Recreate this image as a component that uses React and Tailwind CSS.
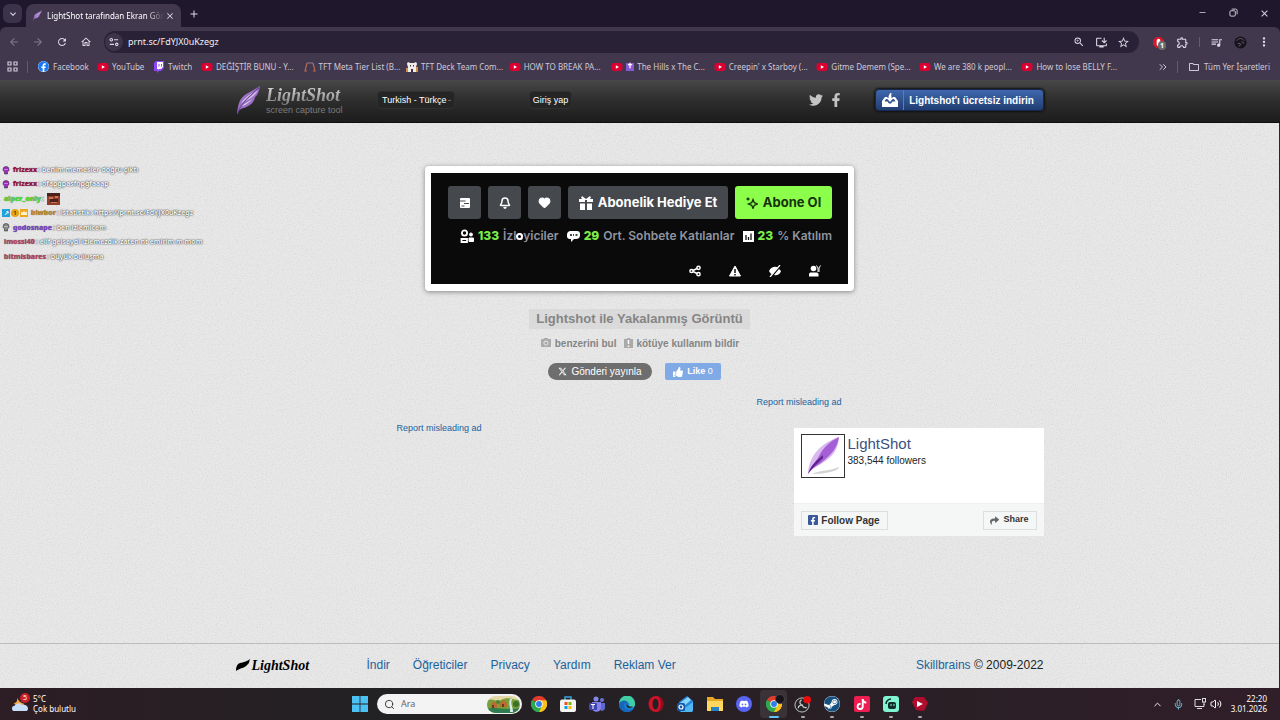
import React, { useState } from 'react';
import { FaFacebook, FaFacebookF, FaTwitter, FaTwitch, FaDiscord, FaSteam, FaTiktok, FaThumbsUp, FaShare } from 'react-icons/fa';
import { FaXTwitter } from 'react-icons/fa6';
import {
  MdArrowBack,
  MdArrowForward,
  MdRefresh,
  MdOutlineHome,
  MdZoomIn,
  MdInstallDesktop,
  MdStarOutline,
  MdOutlineExtension,
  MdQueueMusic,
  MdMoreVert,
  MdKeyboardArrowDown,
  MdOutlineFolder,
  MdClose,
  MdAdd,
  MdCameraAlt,
} from 'react-icons/md';
import { Bell, Heart, Mic, Volume2, ChevronUp, ChevronsRight, Search, Minus } from 'lucide-react';

const videoBookmarks = [
  { icon: 'youtube', label: 'DEĞİŞTİR BUNU - Y...' },
  { icon: 'tft', label: 'TFT Meta Tier List (B...' },
  { icon: 'deck', label: 'TFT Deck Team Com...' },
  { icon: 'youtube', label: 'HOW TO BREAK PA...' },
  { icon: 'youtube', label: 'The Hills x The C...', cross: true },
  { icon: 'youtube', label: "Creepin' x Starboy (..." },
  { icon: 'youtube', label: 'Gitme Demem (Spe...' },
  { icon: 'youtube', label: 'We are 380 k peopl...' },
  { icon: 'youtube', label: 'How to lose BELLY F...' },
];

const chatLines = [
  { badges: ['purple'], name: 'frizexx', color: 'text-[#9c1040]', text: 'benim memesler doğru çıktı' },
  { badges: ['purple'], name: 'frizexx', color: 'text-[#9c1040]', text: 'ofapğpasfopğfaaap' },
  { badges: [], name: 'alper_only', color: 'text-[#4be32c]', text: '', emote: true },
  { badges: ['blue', 'gold', 'orange'], name: 'blwbor', color: 'text-[#c98a2b]', text: 'istatistik: https://prnt.sc/FdYJX0uKzegz' },
  { badges: ['gray'], name: 'godosnape', color: 'text-[#7a45c9]', text: 'ben izlemicem' },
  { badges: [], name: 'imossi40', color: 'text-[#b8445f]', text: 'elif gelseydi izlemezdik zaten nt emirim m mom' },
  { badges: [], name: 'bitmisbares', color: 'text-[#b8445f]', text: 'büyük buluşma' },
];

const footerLinks = ['İndir', 'Öğreticiler', 'Privacy', 'Yardım', 'Reklam Ver'];

function Feather({ className }) {
  return (
    <svg viewBox="0 0 26 32" className={className} aria-hidden="true">
      <path d="M25 1C17 7 5 10 3 19c-1 3-2 7-2 12 1-3 2-5 5-6 9-2 13-7 14-12 3-3 5-7 5-12z" fill="#9a6fc4" />
      <path d="M23 5C14 10 7 15 5 20c4-3 9-4 14-9 2-2 3-4 4-6zM5 23c5-1 9-4 12-8-4 3-8 4-12 8z" fill="#d3c3e4" />
      <path d="M24 3C15 12 5 18 1 31" fill="none" stroke="#6a4596" strokeWidth="1.1" />
    </svg>
  );
}

function YoutubeIcon({ className }) {
  return (
    <svg viewBox="0 0 12 12" className={className} aria-hidden="true">
      <rect x=".5" y="2" width="11" height="8" rx="2.4" fill="#dc0030" />
      <path d="M4.8 4.3v3.4L8 6z" fill="#fff" />
    </svg>
  );
}

function BookmarkIcon({ name }) {
  if (name === 'youtube') return <YoutubeIcon className="size-3 shrink-0" />;
  if (name === 'tft')
    return (
      <svg viewBox="0 0 12 12" className="size-3 shrink-0" fill="none" aria-hidden="true">
        <path d="M3 2h6" stroke="#7d7187" strokeWidth="1.2" />
        <path d="M3 2 1 10h2M9 2l2 8H9" stroke="#c06a55" strokeWidth="1.1" />
      </svg>
    );
  return (
    <svg viewBox="0 0 12 12" className="size-3 shrink-0" aria-hidden="true">
      <path d="M1 3c0-2 2-2 3-1h4c1-1 3-1 3 1l-1 3 1 5H1l1-5z" fill="#f0ecea" />
      <path d="M0 7h2v4H0zM10 6h2v5h-2z" fill="#cf8e4e" />
      <path d="M4 4h1v1.500H4zM7 4h1v1.500H7zM5 8h2v3H5z" fill="#3d3340" />
    </svg>
  );
}

function ChromeIcon({ className }) {
  return (
    <svg viewBox="0 0 24 24" className={className} aria-hidden="true">
      <path d="M12 12 1.6 6A12 12 0 0 1 22.4 6z" fill="#e33b2e" />
      <path d="M12 12 22.4 6A12 12 0 0 1 12 24z" fill="#fbc116" />
      <path d="M12 12v12A12 12 0 0 1 1.6 6z" fill="#2da94f" />
      <path d="M12 6.500h10.600A12 12 0 0 1 12 24l4.800-9.300z" fill="#fbc116" />
      <path d="M1.6 6 7.2 14.800 16.700 14.800 12 24A12 12 0 0 1 1.6 6z" fill="#2da94f" />
      <circle cx="12" cy="12" r="5.6" fill="#fff" />
      <circle cx="12" cy="12" r="4.4" fill="#2f7de9" />
    </svg>
  );
}

function WindowTabs() {
  return (
    <div className="flex h-[27px] items-center">
      <button aria-label="Sekme ara" className="ml-[3px] flex h-[19px] w-[19px] items-center justify-center rounded-md bg-[#3b3349]">
        <MdKeyboardArrowDown className="size-3" />
      </button>
      <div className="ml-1 flex h-[23px] w-[155px] items-center self-end rounded-t-lg bg-[#41384d] px-1.5">
        <Feather className="h-[11px] w-[11px] shrink-0" />
        <span className="ml-1 whitespace-nowrap text-[8px] text-white [mask-image:linear-gradient(to_right,black_85%,transparent)]">
          LightShot tarafından Ekran Gör
        </span>
        <button aria-label="Sekmeyi kapat" className="ml-auto">
          <MdClose className="size-[10px]" />
        </button>
      </div>
      <button aria-label="Yeni sekme" className="ml-[7px]">
        <MdAdd className="size-3" />
      </button>
      <div className="ml-auto flex">
        <button aria-label="Küçült" className="flex w-[31px] justify-center">
          <Minus className="size-[9px]" />
        </button>
        <button aria-label="Önceki boyut" className="flex w-[31px] justify-center">
          <svg viewBox="0 0 10 10" className="size-[9px]" fill="none" stroke="currentColor">
            <rect x="1" y="3" width="6" height="6" rx="1.2" />
            <path d="M3 1.2h4.5A1.5 1.5 0 0 1 9 2.7V7" />
          </svg>
        </button>
        <button aria-label="Kapat" className="flex w-[31px] justify-center">
          <MdClose className="size-[11px]" />
        </button>
      </div>
    </div>
  );
}

function AddressRow() {
  const [url, setUrl] = useState('prnt.sc/FdYJX0uKzegz');
  return (
    <div className="flex h-[22px] items-center pl-0.5 pr-1">
      <button aria-label="Geri" className="flex w-6 justify-center text-[#83798f]"><MdArrowBack className="size-3" /></button>
      <button aria-label="İleri" className="flex w-6 justify-center text-[#83798f]"><MdArrowForward className="size-3" /></button>
      <button aria-label="Yenile" className="flex w-6 justify-center"><MdRefresh className="size-3" /></button>
      <button aria-label="Ana sayfa" className="flex w-6 justify-center"><MdOutlineHome className="size-3" /></button>
      <div className="ml-1.5 flex h-[22px] flex-1 items-center rounded-full bg-[#292135] pl-px pr-[5px]">
        <button aria-label="Site bilgileri" className="flex size-[18px] items-center justify-center rounded-full bg-[#3d3449]">
          <svg viewBox="0 0 12 12" className="size-[10px]" fill="none" stroke="currentColor" strokeWidth="1.3">
            <circle cx="2.7" cy="3.2" r="1.5" />
            <path d="M6 3.200h5M1 8.800h5" />
            <circle cx="9.3" cy="8.8" r="1.5" />
          </svg>
        </button>
        <input
          aria-label="Adres çubuğu"
          value={url}
          onChange={e => setUrl(e.target.value)}
          className="ml-[5px] min-w-0 flex-1 bg-transparent text-[9px] text-[#f2eef5] outline-none"
        />
        <button aria-label="Yakınlaştır" className="flex w-[22px] justify-center"><MdZoomIn className="size-3" /></button>
        <button aria-label="Yükle" className="flex w-[22px] justify-center"><MdInstallDesktop className="size-[13px]" /></button>
        <button aria-label="Yer işareti ekle" className="flex w-[22px] justify-center"><MdStarOutline className="size-[13px]" /></button>
      </div>
      <button aria-label="Reklam engelleyici" className="relative ml-[7px] flex w-6 justify-center">
        <svg viewBox="0 0 12 12" className="size-[11px]">
          <path d="M3.500 0h5L12 3.500v5L8.500 12h-5L0 8.500v-5z" fill="#d5182b" />
          <path d="M4 9V5c0-2 1-3 2-3s2 1 2 2v4l-2 2z" fill="#fff" />
        </svg>
        <span className="absolute left-3 top-1 h-[9px] w-2 rounded-sm bg-[#6b6b6b] text-center text-[7px] font-bold leading-[9px] text-white">1</span>
      </button>
      <button aria-label="Uzantılar" className="flex w-6 justify-center"><MdOutlineExtension className="size-[13px]" /></button>
      <div className="flex w-[10px] justify-center"><div className="h-[10px] w-px bg-[#655a72]" /></div>
      <button aria-label="Medya" className="flex w-6 justify-center"><MdQueueMusic className="size-[13px]" /></button>
      <button aria-label="Profil" className="flex w-6 justify-center">
        <svg viewBox="0 0 14 14" className="size-[13px]">
          <circle cx="7" cy="7" r="6.5" fill="#17131c" />
          <path d="M3 5c2-3 6-3 8 0M4 8h3M8 6l3 2M5 11l3-2" stroke="#6d6575" fill="none" />
        </svg>
      </button>
      <button aria-label="Menü" className="flex w-6 justify-center"><MdMoreVert className="size-[14px]" /></button>
    </div>
  );
}

function BookmarksRow() {
  return (
    <div className="flex h-[27px] items-center whitespace-nowrap pl-[7px] pr-[10px] text-[8px] text-[#d0c8d8]">
      <button aria-label="Uygulamalar">
        <svg viewBox="0 0 11 11" className="size-[11px]" fill="none" stroke="currentColor" strokeWidth="1.2">
          <path d="M1 1h3v3H1zM7 1h3v3H7zM1 7h3v3H1zM7 7h3v3H7z" />
        </svg>
      </button>
      <div className="ml-[9px] h-3 w-px bg-[#655a72]" />
      <a href="#" className="ml-[10px] flex w-[59px] items-center gap-1">
        <span className="rounded-full bg-white"><FaFacebook className="size-[11px] text-[#1877f2]" /></span>Facebook
      </a>
      <a href="#" className="flex w-14 items-center gap-[3px]"><YoutubeIcon className="size-3" />YouTube</a>
      <a href="#" className="flex w-12 items-center gap-1">
        <svg viewBox="0 0 11 12" className="h-3 w-[11px]" aria-hidden="true">
          <path d="M3 0h8v7L8 10H6l-2 2v-2H1V2z" fill="#8f45f5" />
          <path d="M4 1h6v5L8 8H6L5 9V8H4z" fill="#fff" />
          <path d="M6 3v2.500M8.500 3v2.500" stroke="#8f45f5" />
        </svg>
        Twitch
      </a>
      <div className="grid w-[923px] grid-cols-9">
        {videoBookmarks.map(item => (
          <a href="#" key={item.label} className="flex items-center gap-[3px]">
            <BookmarkIcon name={item.icon} />
            {item.cross && <span className="flex size-2 items-center justify-center bg-[#8559d6] text-[7px] font-bold text-white">✝</span>}
            {item.label}
          </a>
        ))}
      </div>
      <button aria-label="Diğer yer işaretleri" className="ml-auto"><ChevronsRight className="size-3" /></button>
      <div className="ml-2 mr-[10px] h-3 w-px bg-[#655a72]" />
      <a href="#" className="flex items-center gap-1"><MdOutlineFolder className="size-3" />Tüm Yer İşaretleri</a>
    </div>
  );
}

function SiteHeader() {
  return (
    <header className="border-b border-[#0f0f0f] bg-linear-to-b from-[#484848] via-[#2d2d2d] to-[#1c1c1c] font-['Liberation_Sans',sans-serif]">
      <div className="mx-auto flex h-[42px] w-full max-w-[808px] items-center pb-0.5">
        <a href="#" className="flex w-[141px] items-center gap-[5px]">
          <Feather className="h-[30px] w-[25px]" />
          <span className="flex flex-col items-start">
            <span className="bg-linear-to-b from-[#e4e4e4] to-[#777] bg-clip-text pr-1 font-['Liberation_Serif',serif] text-[18px] font-bold italic leading-5 text-transparent">LightShot</span>
            <span className="text-[9px] leading-[10px] text-[#7c7c7c]">screen capture tool</span>
          </span>
        </a>
        <div className="relative flex">
          <select aria-label="Dil" className="h-[18px] w-[78px] appearance-none rounded border border-[#303030] bg-[#252525] pl-1 text-[9px] leading-4 text-white">
            <option>Turkish - Türkçe</option>
          </select>
          <span className="pointer-events-none absolute right-1 top-[9px] h-px w-[3px] bg-[#6a6a6a]" />
        </div>
        <button className="ml-[74px] h-[18px] w-[43px] rounded border border-[#303030] bg-[#252525] text-[9px] leading-4 text-white">Giriş yap</button>
        <a href="#" aria-label="Twitter" className="ml-auto text-[#c4c4c4]"><FaTwitter className="size-[14px]" /></a>
        <a href="#" aria-label="Facebook" className="ml-[6px] text-[#c4c4c4]"><FaFacebookF className="size-[14px]" /></a>
        <button className="ml-8 flex h-[22px] w-[169px] items-center rounded border border-[#16284d] bg-linear-to-b from-[#3f68ae] to-[#213e73] text-[10px] font-bold text-white shadow-[0_0_2px_1px_#111]">
          <span className="flex h-full w-7 items-center justify-center border-r border-[#5b7db5]">
            <svg viewBox="0 0 16 14" className="h-[14px] w-4" fill="#fff" aria-hidden="true">
              <path d="M0 8 3 4h2.500v2H4L2.500 8.500h3l1.500 2h2l1.500-2h3L12 6h-1.500V4H13l3 4v6H0z" />
              <path d="M8.500 0C7 1 6.500 3 6.500 5H4.500L8 9l3.500-4h-2c0-2-.5-3 0-5z" />
            </svg>
          </span>
          <span className="flex-1 pr-1 text-center">Lightshot'ı ücretsiz indirin</span>
        </button>
      </div>
    </header>
  );
}

function ChatBadge({ kind }) {
  if (kind === 'blue') return <span className="flex size-2 items-center justify-center bg-[#1fa3d8] text-[6px] text-white">↗</span>;
  if (kind === 'gold') return <span className="flex size-2 items-center justify-center rounded-full bg-[#e5a512] text-[6px] text-[#503400]">1</span>;
  if (kind === 'orange')
    return (
      <svg viewBox="0 0 8 8" className="size-2" aria-hidden="true">
        <path d="M0 0h8v8H0z" fill="#f0a51f" />
        <path d="M1 6V2.500l1.500 1L4 2l1.500 1.500 1.500-1V6z" fill="#fff3d0" />
      </svg>
    );
  return (
    <svg viewBox="0 0 8 9" className={kind === 'purple' ? 'h-[9px] w-2 text-[#a32bc4]' : 'h-[9px] w-2 text-[#888]'} aria-hidden="true">
      <path d="M1 3.500a3 3 0 0 1 6 0C7 5 6 5.500 5.500 6v2h-3V6C2 5.500 1 5 1 3.500z" fill="currentColor" stroke="#333" strokeWidth=".6" />
      <path d="M2.500 3.500h1M4.500 3.500h1" stroke="#fff" strokeWidth=".8" />
    </svg>
  );
}

function ChatOverlay() {
  return (
    <ul className="absolute left-[2px] top-[40px] z-10 grid h-[101px] grid-rows-7 font-['Noto_Sans',sans-serif] text-[7px] font-semibold">
      {chatLines.map((line, i) => (
        <li key={i} className="flex items-center gap-px whitespace-nowrap">
          {line.badges.map(b => <ChatBadge key={b} kind={b} />)}
          <span className={`${line.color} ml-[2px] font-extrabold [text-shadow:0_0_1px_#555]`}>{line.name}</span>
          <span className="text-white [text-shadow:0_0_1px_#444,0_0_1px_#666,0_0_2px_#666]">: {line.text}</span>
          {line.emote && (
            <svg viewBox="0 0 13 12" className="ml-0.5 h-3 w-[13px]" aria-hidden="true">
              <path d="M0 0h13v12H0z" fill="#8e3f2c" />
              <path d="M0 0h13v3H0zM3 6h8v3H3z" fill="#4b211d" />
              <path d="M2 4h4v2H2zM8 3h3v2H8zM4 9h6v1H4z" fill="#d2714d" />
            </svg>
          )}
        </li>
      ))}
    </ul>
  );
}

function StreamCapture() {
  return (
    <div className="w-[429px] rounded bg-white px-[6px] py-[7px] shadow-[0_1px_5px_#888]">
      <div className="bg-[#0a0a0b] pb-[7px] pl-[17px] pr-4 pt-[13px] font-['Inter',sans-serif] font-semibold text-white">
        <div className="flex h-[33px] gap-[7px] text-[13px] font-bold">
          <button aria-label="Sohbet" className="flex w-[33px] items-center justify-center rounded-[3px] bg-[#45484c]">
            <svg viewBox="0 0 12 12" className="size-3">
              <rect x="1" y="1" width="10" height="10" rx="1" fill="#fff" />
              <path d="M1 4h5.500M5 6.500h5M2.500 9h3" stroke="#45484c" strokeWidth="1.200" />
            </svg>
          </button>
          <button aria-label="Bildirimler" className="flex w-[33px] items-center justify-center rounded-[3px] bg-[#45484c]">
            <Bell className="size-3" strokeWidth={3} />
          </button>
          <button aria-label="Takip" className="flex w-[33px] items-center justify-center rounded-[3px] bg-[#45484c]">
            <Heart className="size-[13px] fill-white" />
          </button>
          <button className="flex flex-1 items-center justify-center gap-[5px] whitespace-nowrap rounded-[3px] bg-[#45484c]">
            <svg viewBox="0 0 14 14" className="size-[14px]" fill="#fff" aria-hidden="true">
              <path d="M0 3h6v3H0zM8 3h6v3H8zM1 7.500h5V14H1zM8 7.500h5V14H8z" />
              <path d="M3 0l4 3 4-3 1 2-3 2H5L2 2z" />
            </svg>
            Abonelik Hediye Et
          </button>
          <button className="flex w-[97px] items-center justify-center gap-[5px] whitespace-nowrap rounded-[3px] bg-[#8bff49] text-[#16310d]">
            <svg viewBox="0 0 12 12" className="size-3" fill="none" stroke="currentColor" strokeWidth="1.300" aria-hidden="true">
              <path d="M7 2.500 8.300 5.700 11.500 7 8.300 8.300 7 11.500 5.700 8.300 2.500 7 5.700 5.700z" />
              <path d="M2 .5v3M.5 2h3" />
            </svg>
            Abone Ol
          </button>
        </div>
        <div className="relative mt-[9px] flex h-4 items-center justify-between whitespace-nowrap pl-3 text-[12px] text-[#9095a0]">
          <span className="flex items-center gap-1">
            <svg viewBox="0 0 14 14" className="size-[14px]" fill="none" stroke="#fff" strokeWidth="1.800" aria-hidden="true">
              <circle cx="4.500" cy="4" r="2.600" />
              <path d="M1.500 13v-3h5.500v3z" />
              <circle cx="11" cy="5.500" r="1.500" fill="#fff" strokeWidth="1" />
              <path d="M9 9h4.500v3.500H9z" fill="#fff" strokeWidth="1" />
            </svg>
            <b className="font-extrabold text-[#7fee48]">133</b> İzleyiciler
          </span>
          <span className="flex items-center gap-1">
            <svg viewBox="0 0 13 12" className="h-3 w-[13px]" aria-hidden="true">
              <path d="M3 1h7a3 3 0 0 1 3 3v1a4 4 0 0 1-4 4H7l-3 3V9H3a3 3 0 0 1-3-4 4 4 0 0 1 3-4z" fill="#fff" />
              <path d="M3 5h2M6 5h1M8.500 5h2" stroke="#111" strokeWidth="1.500" />
            </svg>
            <b className="font-extrabold text-[#7fee48]">29</b> Ort. Sohbete Katılanlar
          </span>
          <span className="flex items-center gap-1">
            <svg viewBox="0 0 11 11" className="size-[11px]" aria-hidden="true">
              <rect width="11" height="11" fill="#fff" />
              <path d="M3 9V4M5.500 9V6M8 9V2.500" stroke="#111" strokeWidth="1.300" />
            </svg>
            <b className="font-extrabold text-[#7fee48]">23</b> % Katılım
          </span>
          <span className="absolute left-[68px] top-[5px] size-[7px] rounded-full border-2 border-white bg-black" />
        </div>
        <div className="mt-[21px] flex justify-end gap-7 pr-[11px]">
          <button aria-label="Paylaş">
            <svg viewBox="0 0 12 12" className="size-3" fill="none" stroke="#fff" strokeWidth="1.500">
              <circle cx="2.500" cy="6" r="1.600" /><circle cx="9.500" cy="2.800" r="1.600" /><circle cx="9.500" cy="9.200" r="1.600" />
              <path d="m4 5.500 4-2M4 6.500l4 2" />
            </svg>
          </button>
          <button aria-label="Uyarı">
            <svg viewBox="0 0 12 12" className="size-3"><path d="M6 1 11.500 11H.5z" fill="#fff" stroke="#fff" strokeLinejoin="round" /><path d="M6 4v4M6 9v1.500" stroke="#111" strokeWidth="1.500" /></svg>
          </button>
          <button aria-label="Gizle">
            <svg viewBox="0 0 12 12" className="size-3"><path d="M0 6c2-4 6-5 9-3.500L3 9.500C2 9 1 8 0 6zM12 6c-1 4-5 5-7 4l5-6z" fill="#fff" /><path d="M1 12 11 0" stroke="#fff" strokeWidth="1.300" /></svg>
          </button>
          <button aria-label="Moderasyon">
            <svg viewBox="0 0 12 12" className="size-3" fill="#fff"><circle cx="4.500" cy="3.500" r="2.800" /><path d="M0 11.500V9.500C0 8 1 7.500 2 7.500h5c1.500 0 2.500.5 2.500 2v2z" /><path d="M7.500.5 9 3v4M11.500.5 10 3v4" fill="none" stroke="#fff" /></svg>
          </button>
        </div>
      </div>
    </div>
  );
}

function FollowBox() {
  return (
    <section className="mt-1.5 w-[250px] bg-white">
      <div className="flex h-[75px] gap-[3px] p-[6px] pl-[7px]">
        <span className="flex size-11 items-center justify-center border border-[#333] bg-white">
          <svg viewBox="0 0 40 40" className="size-10" aria-hidden="true">
            <path d="M9 38c8-4 18-3 27-7 0 4-14 7-27 7z" fill="#d4d4d4" />
            <path d="M36 1C22 6 6 16 5 38c4-6 8-7 13-10 12-7 17-14 18-27z" fill="#d9b9ee" />
            <path d="M36 1C27 5 20 12 16 20c-3 6-8 9-11 18 4-6 9-8 14-12C29 18 34 12 36 1z" fill="#a55fd6" />
            <path d="M20 19C13 25 8 29 5 38c4-6 9-10 15-16z" fill="#5f2390" />
          </svg>
        </span>
        <div>
          <a href="#" className="block text-[15px] leading-5 text-[#3b5083]">LightShot</a>
          <div className="text-[10px] leading-[14px] text-[#222]">383,544 followers</div>
        </div>
      </div>
      <div className="flex h-[33px] items-center justify-between border-t border-[#eef0f0] bg-[#f5f7f7] px-[7px] font-bold text-[#333]">
        <button className="flex h-[19px] w-[87px] items-center justify-center gap-[3px] border border-[#dcdfe0] text-[10px]">
          <span className="flex size-[10px] items-end justify-center rounded-[1px] bg-[#3b5998]"><FaFacebookF className="size-2 text-white" /></span>
          Follow Page
        </button>
        <button className="flex h-[19px] w-[54px] items-center justify-center gap-1 border border-[#dcdfe0] text-[9px]">
          <FaShare className="size-[9px] text-[#666]" />Share
        </button>
      </div>
    </section>
  );
}

function Content() {
  return (
    <main className="relative flex-1 pb-6 pt-[43px]">
      <ChatOverlay />
      <div className="mx-auto w-full max-w-[808px]">
        <div className="flex flex-col items-center">
          <StreamCapture />
          <h1 className="mt-[18px] h-5 bg-[#dadada] px-[7px] text-[13px] font-bold leading-5 text-[#858585]">Lightshot ile Yakalanmış Görüntü</h1>
          <div className="mt-[7px] flex h-[14px] items-center gap-2 text-[10px] font-bold text-[#858585]">
            <a href="#" className="flex items-center gap-[3px]"><MdCameraAlt className="size-3 text-[#aaa]" />benzerini bul</a>
            <a href="#" className="flex items-center gap-[3px]">
              <svg viewBox="0 0 9 10" className="h-[10px] w-[9px]" aria-hidden="true">
                <path d="M0 1h3V0h3v1h3v9H0z" fill="#aaa" />
                <path d="M4.500 2v4M4.500 7.500V9" stroke="#fff" strokeWidth="1.500" />
              </svg>
              kötüye kullanım bildir
            </a>
          </div>
          <div className="mt-[13px] flex gap-[13px] pr-[10px] text-[10px] text-white">
            <button className="flex h-[17px] w-[104px] items-center justify-center gap-1 rounded-full bg-[#6e6e6e]"><FaXTwitter className="size-[9px]" />Gönderi yayınla</button>
            <button className="flex h-[17px] w-14 items-center justify-center gap-1 rounded-xs bg-[#80aae5] text-[9px]">
              <FaThumbsUp className="size-[10px]" />
              <span><b>Like</b> 0</span>
            </button>
          </div>
        </div>
        <div className="mt-4 pr-[202px] text-right text-[9px] leading-3 text-[#1b629c]"><a href="#">Report misleading ad</a></div>
        <div className="mt-[14px] flex justify-between pl-[161px]">
          <a href="#" className="text-[9px] leading-3 text-[#1b629c]">Report misleading ad</a>
          <FollowBox />
        </div>
      </div>
    </main>
  );
}

function SiteFooter() {
  return (
    <footer className="relative border-t border-[#bdbdbd]">
      <div className="mx-auto flex h-11 w-full max-w-[808px] items-center pb-0.5 text-[12px] text-[#1b629c]">
        <a href="#" className="flex w-[131px] items-center gap-0.5 text-black">
          <svg viewBox="0 0 14 12" className="h-3 w-[14px]" aria-hidden="true"><path d="M0 12C0 8 1 5 4 4c4-1 6-1 10-4-1 2 0 4-3 6-2 3-7 3-11 6z" /></svg>
          <span className="font-['Liberation_Serif',serif] text-[14px] font-bold italic">LightShot</span>
        </a>
        <nav className="flex gap-[23px]">
          {footerLinks.map(label => <a href="#" key={label}>{label}</a>)}
        </nav>
        <div className="ml-auto text-[#222]"><a href="#" className="text-[#1b629c]">Skillbrains</a> © 2009-2022</div>
      </div>
    </footer>
  );
}

function TaskbarApp({ label, children, running, active }) {
  return (
    <button aria-label={label} className={active ? 'relative mx-px flex h-7 items-center justify-center rounded bg-[#393237]' : 'relative flex h-7 items-center justify-center'}>
      {children}
      {running && <span className="absolute bottom-0 h-0.5 w-1 rounded-full bg-[#aaa]" />}
      {active && <span className="absolute bottom-0 h-0.5 w-[10px] rounded-full bg-[#62c2f5]" />}
    </button>
  );
}

function Taskbar() {
  return (
    <div className="grid h-8 grid-cols-[1fr_auto_1fr] items-center bg-linear-to-r from-[#2d1d25] via-[#222123] via-30% to-[#301e28] text-[8px] text-white">
      <button className="flex items-center gap-[5px] pl-3 text-left leading-[10px]">
        <span className="relative">
          <svg viewBox="0 0 18 18" className="h-[18px] w-4" aria-hidden="true">
            <path d="M6 2c1 4 4 6 8 7-3 4-10 3-12-1 3 0 4-2 4-6z" fill="#f3a63a" />
            <path d="M3 17a3 3 0 0 1 0-6c1-3 7-4 8-1 5-1 7 2 7 4 0 2-1 3-3 3z" fill="#c8ddf8" />
          </svg>
          <span className="absolute -top-0.5 left-2 size-[10px] rounded-full bg-[#c41f2a] text-center text-[7px]">5</span>
        </span>
        <span>5°C<br />Çok bulutlu</span>
      </button>
      <div className="flex items-center">
        <button aria-label="Başlat" className="flex w-[29px] justify-center">
          <svg viewBox="0 0 16 16" className="size-4"><path d="M0 0h7.600v7.600H0zM8.400 0H16v7.600H8.400zM0 8.400h7.600V16H0zM8.400 8.400H16V16H8.400z" fill="#4cc2f4" /></svg>
        </button>
        <label className="ml-[3px] mr-0.5 flex h-5 w-[145px] items-center rounded-full bg-[#f3f3f3] pl-[7px] pr-0.5 text-[#333]">
          <Search className="size-[11px]" />
          <input aria-label="Ara" placeholder="Ara" className="ml-1.5 min-w-0 flex-1 bg-transparent text-[9px] outline-none placeholder:text-[#666]" />
          <svg viewBox="0 0 33 17" className="h-[17px] w-[33px] overflow-hidden rounded-full" aria-hidden="true">
            <path d="M0 0h33v17H0z" fill="#e3d9a8" />
            <path d="M0 5c6-4 9 2 14-1 7-4 11 0 19 0v13H0z" fill="#7a9f3d" />
            <path d="M0 13c8-3 20 2 33-1v5H0z" fill="#2f7c50" />
            <path d="M4 12V8l3-3 3 3v4zM13 11V7l3-3 4 3v4z" fill="#b76d31" />
            <path d="M5 9h2v3H5zM15 8h2v3h-2z" fill="#6d3b1c" />
            <path d="M23 3c-2 5 1 8 0 13h3c0-5-3-8-1-13z" fill="#d6eef0" />
            <circle cx="29" cy="8" r="3" fill="#39702c" />
            <circle cx="11" cy="6" r="2" fill="#4c8232" />
          </svg>
        </label>
        <div className="grid w-[411px] grid-cols-14">
          <TaskbarApp label="Chrome"><ChromeIcon className="size-4" /></TaskbarApp>
          <TaskbarApp label="Microsoft Store">
            <svg viewBox="0 0 16 16" className="size-4">
              <path d="M5 4V1h6v3" fill="none" stroke="#36a3e0" strokeWidth="1.500" />
              <rect y="3.500" width="16" height="12.500" rx="2" fill="#f4f4f4" />
              <path d="M4.500 6h3v3h-3z" fill="#f25022" /><path d="M8.500 6h3v3h-3z" fill="#7fba00" />
              <path d="M4.500 10h3v3h-3z" fill="#00a4ef" /><path d="M8.500 10h3v3h-3z" fill="#ffb900" />
            </svg>
          </TaskbarApp>
          <TaskbarApp label="Teams">
            <svg viewBox="0 0 16 16" className="size-4">
              <circle cx="7" cy="3" r="2.500" fill="#8088ec" /><circle cx="13" cy="4" r="2" fill="#6a72da" />
              <path d="M10 7h6v5c0 2-2 3-4 3z" fill="#6068d0" /><path d="M3 6h9v6c0 5-9 5-9 0z" fill="#8582f0" />
              <rect y="7" width="8" height="7" rx="1" fill="#4146ae" /><path d="M2 8.500h4M4 8.500V13" stroke="#fff" />
            </svg>
          </TaskbarApp>
          <TaskbarApp label="Edge">
            <svg viewBox="0 0 16 16" className="size-4">
              <circle cx="8" cy="8" r="8" fill="#1680d8" />
              <path d="M0 8a8 8 0 0 1 16-1c1 4-4 6-7 4 2-1 2-5-2-5C4 6 1 7 0 8z" fill="#42cda4" />
              <path d="M0 8c1-4 8-5 9-1-3-1-5 2-3 5 2 2 5 2 8 1-3 5-14 4-14-5z" fill="#1767b9" />
              <path d="M8.500 7c-1.500 2 1 4 5 3.500 1 0-1 1.500-3 1.500-3 0-4-3-2-5z" fill="#222123" />
            </svg>
          </TaskbarApp>
          <TaskbarApp label="Opera">
            <svg viewBox="0 0 16 16" className="size-4"><ellipse cx="8" cy="8" rx="7.500" ry="8" fill="#d11229" /><path d="M10 1c8 2 7 12 0 14 4-4 4-10 0-14z" fill="#8e0c1d" /><ellipse cx="7.500" cy="8" rx="3" ry="5.500" fill="#222123" /></svg>
          </TaskbarApp>
          <TaskbarApp label="Outlook">
            <svg viewBox="0 0 16 16" className="size-4">
              <path d="M2 6 10 0l6 5v9c0 1-1 2-2 2H4c-1 0-2-1-2-2z" fill="#2587d8" /><path d="m3 7 8-6 3 3-8 7z" fill="#8ad3fa" /><path d="m4 15 12-9v8c0 1-1 2-2 2H4z" fill="#50b7f2" />
              <rect y="7" width="8" height="8" rx="1.500" fill="#1259a8" /><circle cx="4" cy="11" r="2" fill="none" stroke="#fff" strokeWidth="1.200" />
            </svg>
          </TaskbarApp>
          <TaskbarApp label="Dosya Gezgini">
            <svg viewBox="0 0 16 16" className="size-4"><path d="M0 1h6l2 2h8v12H0z" fill="#e9a824" /><path d="M0 5h16v10H0z" fill="#ffd75e" /><path d="M4 15v-4h8v4z" fill="#2783c5" /></svg>
          </TaskbarApp>
          <TaskbarApp label="Discord"><span className="flex size-4 items-center justify-center rounded-full bg-[#5865f2]"><FaDiscord className="size-[10px]" /></span></TaskbarApp>
          <TaskbarApp label="Chrome penceresi" active>
            <ChromeIcon className="size-4" />
            <span className="absolute right-0.5 top-1 size-[10px] rounded-full border border-[#48404c] bg-[#17131b]" />
          </TaskbarApp>
          <TaskbarApp label="OBS Studio" running>
            <svg viewBox="0 0 18 18" className="size-[17px]">
              <circle cx="8.500" cy="9.500" r="7.500" fill="#252328" stroke="#ccc" />
              <path d="M8 4c-3 2-2 5 1 6M13.500 12c-3 1-5-1-4.500-3M4.500 13c0-3 3-4 4.500-3" fill="none" stroke="#ccc" strokeWidth="1.300" />
              <circle cx="14" cy="4" r="4" fill="#e90c0c" />
            </svg>
          </TaskbarApp>
          <TaskbarApp label="Steam" running><span className="rounded-full bg-white"><FaSteam className="size-4 text-[#145080]" /></span></TaskbarApp>
          <TaskbarApp label="TikTok" running><span className="flex size-4 items-center justify-center rounded-xs bg-[#ee1d52]"><FaTiktok className="size-[11px]" /></span></TaskbarApp>
          <TaskbarApp label="Streamlabs" running>
            <svg viewBox="0 0 16 16" className="size-4"><rect width="16" height="16" rx="3" fill="#80f5d2" /><path d="M3 8a5 5 0 0 1 5-5" fill="none" stroke="#122b29" strokeWidth="1.500" /><rect x="5" y="6" width="8" height="7" rx="2" fill="#122b29" /><path d="M8 8v2M11 8v2" stroke="#80f5d2" /></svg>
          </TaskbarApp>
          <TaskbarApp label="YouTube Music" running>
            <svg viewBox="0 0 16 16" className="size-4"><path d="m3 1 9 0 4 6-4 8-8-1-4-8z" fill="#b00c2d" /><path d="M5 5v6l6-3z" fill="#fff" /></svg>
          </TaskbarApp>
        </div>
      </div>
      <div className="flex items-center justify-end pr-[13px]">
        <button aria-label="Gizli simgeler"><ChevronUp className="size-[11px]" /></button>
        <Mic className="ml-[10px] size-[11px] text-[#7fc4de]" />
        <svg viewBox="0 0 12 12" className="ml-[10px] size-3" fill="none" stroke="#ddd" aria-hidden="true"><path d="M7 1.500H1v7h9V6M3 10.500h5" /><rect x="8.500" y=".5" width="3" height="3.500" /><path d="M10 4v3" /></svg>
        <Volume2 className="ml-1 size-3" />
        <button className="ml-[11px] w-[34px] text-right leading-[10px]"><span className="flex flex-col items-end whitespace-nowrap"><span>22:20</span><span>3.01.2026</span></span></button>
      </div>
    </div>
  );
}

export default function App() {
  return (
    <div className="flex min-h-screen flex-col bg-[#1f182c] font-['Noto_Sans',sans-serif] text-[#ded7e5]">
      <WindowTabs />
      <div className="rounded-t-md bg-[#41384d] pt-1">
        <AddressRow />
        <BookmarksRow />
      </div>
      <SiteHeader />
      <div className="relative flex flex-1 flex-col border-r border-[#2a2430] bg-[#e4e4e4] font-['Liberation_Sans',sans-serif]">
        {/* woven paper grain */}
        <svg className="absolute inset-0 h-full w-full opacity-15" aria-hidden="true">
          <filter id="grain">
            <feTurbulence type="fractalNoise" baseFrequency="0.8" numOctaves="2" stitchTiles="stitch" />
            <feColorMatrix values="1.5 0 0 0 0.14  1.5 0 0 0 0.14  1.5 0 0 0 0.14  0 0 0 0 1" />
          </filter>
          <rect width="100%" height="100%" filter="url(#grain)" />
        </svg>
        <Content />
        <SiteFooter />
      </div>
      <Taskbar />
    </div>
  );
}
